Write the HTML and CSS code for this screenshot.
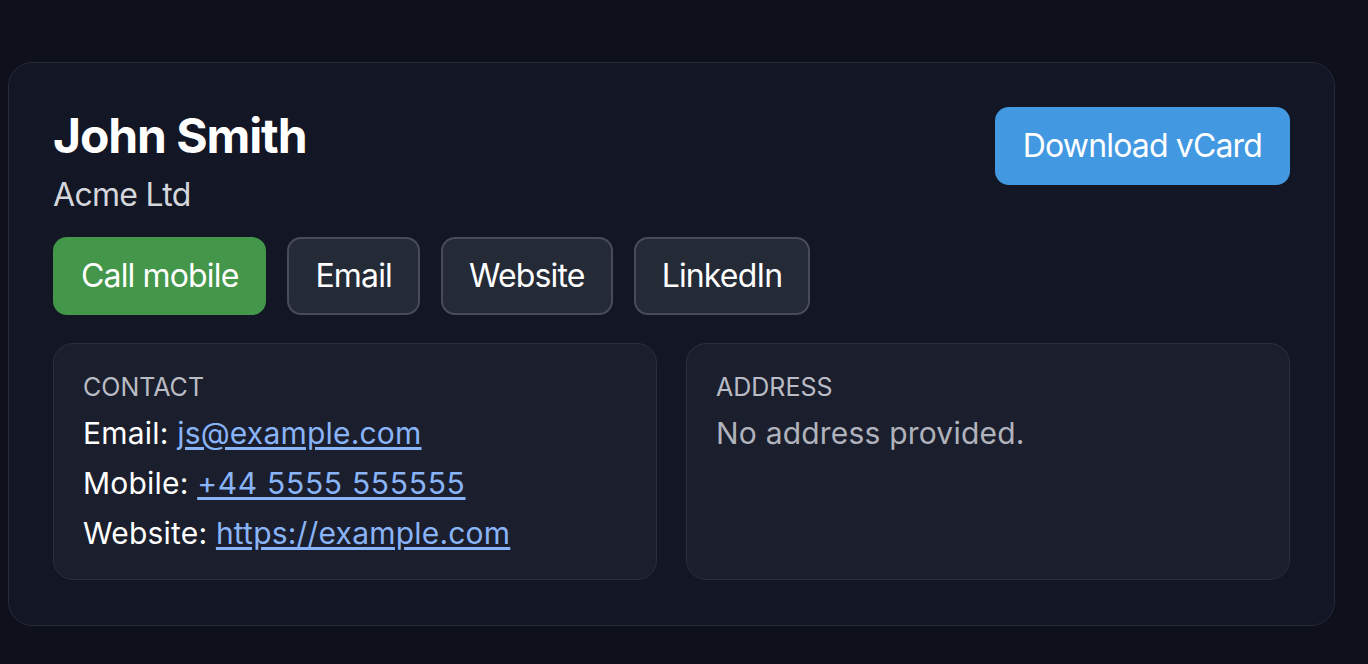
FILE: index.html
```html
<!DOCTYPE html>
<html lang="en">
<head>
<meta charset="utf-8">
<title>John Smith</title>
<link rel="stylesheet" href="styles.css">
</head>
<body>
<main class="page">
  <section class="card">
    <header class="card-head">
      <div class="identity">
        <h1 class="name">John Smith</h1>
        <div class="company">Acme Ltd</div>
      </div>
      <a class="btn btn-blue" href="#">Download vCard</a>
    </header>
    <nav class="actions">
      <a class="btn btn-green" href="#">Call mobile</a>
      <a class="btn btn-dark" href="#">Email</a>
      <a class="btn btn-dark" href="#">Website</a>
      <a class="btn btn-dark" href="#">LinkedIn</a>
    </nav>
    <div class="panels">
      <div class="panel">
        <div class="label">Contact</div>
        <div class="line">Email: <a href="#">js@example.com</a></div>
        <div class="line">Mobile: <a class="tel" href="#">+44 5555 555555</a></div>
        <div class="line">Website: <a href="#">https://example.com</a></div>
      </div>
      <div class="panel">
        <div class="label">Address</div>
        <div class="line muted">No address provided.</div>
      </div>
    </div>
  </section>
</main>
</body>
</html>
```

FILE: styles.css
```css
html, body {
  margin: 0;
  padding: 0;
  background: #0e111b;
}
body {
  font-family: Inter, "Noto Sans", "Liberation Sans", sans-serif;
  color: #ffffff;
}
.page {
  padding: 62px 8px 38px 8px;
}
.card {
  box-sizing: border-box;
  width: 1327px;
  background: #121625;
  border: 1px solid #272b39;
  border-radius: 24px;
  padding: 44px 44px 45px 44px;
}
.card-head {
  display: flex;
  justify-content: space-between;
  align-items: flex-start;
}
.name {
  margin: 0;
  font-size: 48px;
  line-height: 58px;
  font-weight: 700;
  letter-spacing: -1.1px;
}
.company {
  margin-top: 10px;
  font-size: 32px;
  line-height: 39px;
  letter-spacing: -0.7px;
  color: #d4d6dc;
}
.btn {
  display: inline-block;
  font-size: 32px;
  line-height: 38px;
  letter-spacing: -0.85px;
  padding: 20px 28px;
  border-radius: 14px;
  color: #ffffff;
  text-decoration: none;
}
.btn-blue {
  background: #4299e1;
}
.btn-green {
  background: #43964a;
}
.btn-dark {
  background: #252a37;
  border: 2px solid #484c5a;
  padding: 18px 26px;
}
.actions {
  display: flex;
  gap: 21px;
  margin-top: 23px;
}
.panels {
  display: grid;
  grid-template-columns: 1fr 1fr;
  gap: 29px;
  margin-top: 28px;
}
.panel {
  background: #1b1f2d;
  border: 1px solid #2b2f3d;
  border-radius: 20px;
  padding: 28px 30px 21px 29px;
}
.label {
  font-size: 25px;
  line-height: 31px;
  text-transform: uppercase;
  letter-spacing: 0;
  color: #b9bcc4;
  margin-bottom: 5px;
}
.line {
  font-size: 30px;
  line-height: 50px;
  letter-spacing: 0.2px;
  color: #ffffff;
}
.line a {
  color: #8ab4f8;
  text-decoration: underline;
  text-underline-offset: 3px;
}
.line a.tel {
  letter-spacing: 0.7px;
}
.muted {
  color: #b0b3bb;
}
```
